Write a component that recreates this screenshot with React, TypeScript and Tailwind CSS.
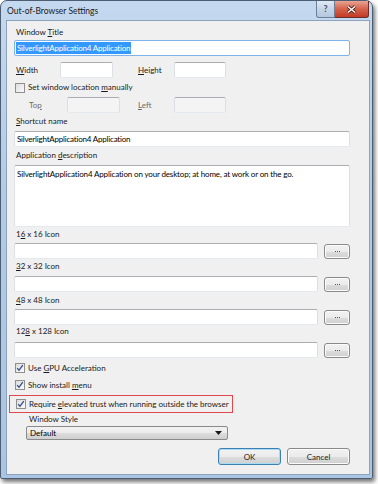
import React from "react";

const font = { fontFamily: 'Lato, "Noto Sans", Arial, sans-serif' };

function U({ children }: { children: React.ReactNode }) {
  return <span className="underline underline-offset-[1px] decoration-[0.5px]">{children}</span>;
}

function Label({ children, className = "" }: { children: React.ReactNode; className?: string }) {
  return <div className={`h-[11px] leading-[11px] text-[8px] text-[#1a1a1a] whitespace-nowrap ${className}`}>{children}</div>;
}

function Input({ className = "", disabled = false, children }: { className?: string; disabled?: boolean; children?: React.ReactNode }) {
  return (
    <div
      className={`h-[16px] rounded-[2px] border border-t-[#abadb3] border-x-[#dbdfe6] border-b-[#e3e9ef] ${
        disabled ? "bg-[#f4f4f4] border-[#c9cbce]" : "bg-white"
      } flex items-center px-[2px] text-[8px] leading-[11px] text-black whitespace-nowrap ${className}`}
    >
      {children}
    </div>
  );
}

function Check({ checked }: { checked?: boolean }) {
  return (
    <div className="w-[10px] h-[10px] border border-[#8f8f8f] bg-gradient-to-br from-[#dcdcdc] to-[#fbfbfb] flex items-center justify-center shrink-0">
      {checked && (
        <svg width="8" height="8" viewBox="0 0 8 8">
          <path d="M1.2 4.2 L3 6.3 L6.8 1.2" fill="none" stroke="#2a4d86" strokeWidth="1.3" />
        </svg>
      )}
    </div>
  );
}

function Btn({ children, className = "", def = false }: { children?: React.ReactNode; className?: string; def?: boolean }) {
  return (
    <div
      className={`rounded-[3px] border ${
        def ? "border-[#3c7fb1] shadow-[inset_0_0_0_1px_#a7dcf7]" : "border-[#8a8a8a] shadow-[inset_0_0_0_1px_#fbfbfb]"
      } bg-[linear-gradient(to_bottom,#f2f2f2_0%,#ebebeb_50%,#dddddd_51%,#cfcfcf_100%)] flex items-center justify-center text-[8px] text-[#1e1e1e] ${className}`}
    >
      {children}
    </div>
  );
}

function IconRow() {
  return (
    <div className="flex items-center gap-[6px]">
      <Input className="w-[304px]" />
      <Btn className="w-[26px] h-[15px]">
        <div className="flex gap-[1px] mt-[1px]">
          <div className="w-[1px] h-[1px] bg-[#555]" />
          <div className="w-[1px] h-[1px] bg-[#555]" />
          <div className="w-[1px] h-[1px] bg-[#555]" />
        </div>
      </Btn>
    </div>
  );
}

export default function App() {
  return (
    <div className="w-[378px] h-[484px] bg-white relative overflow-hidden" style={font}>
      <div className="w-[373px] h-[479px] rounded-t-[7px] rounded-b-[2px] border border-[#4d5e73] bg-[linear-gradient(to_bottom,#c4d9ef,#b3cbe6_40%,#aac4e3)] shadow-[2px_3px_4px_rgba(0,0,0,0.55)] flex flex-col">
        {/* title bar */}
        <div className="h-[19px] flex items-start relative">
          <div className="pl-[6px] pt-[5px] text-[8.5px] leading-[11px] text-[#1b1b1b]">Out-of-Browser Settings</div>
          <div className="absolute right-[3px] top-0 flex">
            <div className="w-[19px] h-[17px] rounded-bl-[3px] border border-[#6d7f98] border-t-0 bg-[linear-gradient(to_bottom,#dfe9f5,#c5d5e8_50%,#b4c7de)] flex items-center justify-center text-[9px] text-[#3f4f66] font-bold">
              ?
            </div>
            <div className="w-[34px] h-[17px] rounded-br-[3px] border border-[#6a2d2a] border-t-0 border-l-0 bg-[linear-gradient(to_bottom,#e8a493,#d5624c_50%,#c23b25)] flex items-center justify-center">
              <svg width="11" height="9" viewBox="0 0 11 9">
                <path d="M2 1.5 L9 7.5 M9 1.5 L2 7.5" stroke="#4a1a12" strokeWidth="3" />
                <path d="M2 1.5 L9 7.5 M9 1.5 L2 7.5" stroke="#ffffff" strokeWidth="1.6" />
              </svg>
            </div>
          </div>
        </div>
        {/* content */}
        <div className="ml-[5px] w-[364px] h-[455px] border border-[#8da2bd] bg-[#f0f0f0] flex flex-col pl-[7px] pr-[19px]">
          <Label className="mt-[6px] pl-[2px]">
            Window <U>T</U>itle
          </Label>
          <div className="mt-[2px] h-[16px] rounded-[2px] border border-[#7eb4ea] bg-white flex items-center px-[1px]">
            <span className="bg-[#3399ff] text-white text-[8px] leading-[12px] px-[1px] tracking-[-0.2px]">SilverlightApplication4 Application</span>
          </div>
          <div className="mt-[6px] flex items-center h-[16px]">
            <Label className="w-[46px] pl-[2px]">
              <U>W</U>idth
            </Label>
            <Input className="w-[53px]" />
            <Label className="ml-[25px] w-[36px]">
              <U>H</U>eight
            </Label>
            <Input className="w-[52px]" />
          </div>
          <div className="mt-[4px] flex items-center gap-[3px] h-[11px] pl-[1px]">
            <Check />
            <Label>
              Set window location <U>m</U>anually
            </Label>
          </div>
          <div className="mt-[4px] flex items-center h-[16px]">
            <Label className="w-[53px] pl-[15px] text-[#6d6d6d]">
              To<U>p</U>
            </Label>
            <Input disabled className="w-[53px]" />
            <Label className="ml-[18px] w-[36px] text-[#6d6d6d]">
              <U>L</U>eft
            </Label>
            <Input disabled className="w-[52px]" />
          </div>
          <Label className="mt-[3px] pl-[2px]">
            <U>S</U>hortcut name
          </Label>
          <Input className="mt-[4px] tracking-[-0.2px]">SilverlightApplication4 Application</Input>
          <Label className="mt-[3px] pl-[2px]">
            Application <U>d</U>escription
          </Label>
          <div className="mt-[4px] h-[62px] rounded-[2px] border border-t-[#abadb3] border-x-[#dbdfe6] border-b-[#e3e9ef] bg-white px-[2px] pt-[3px] text-[8px] leading-[11px] text-black whitespace-nowrap tracking-[-0.15px]">
            SilverlightApplication4 Application on your desktop; at home, at work or on the go.
          </div>
          <Label className="mt-[2px] pl-[2px]">
            1<U>6</U> x 16 Icon
          </Label>
          <div className="mt-[3px]">
            <IconRow />
          </div>
          <Label className="mt-[2px] pl-[2px]">
            <U>3</U>2 x 32 Icon
          </Label>
          <div className="mt-[4px]">
            <IconRow />
          </div>
          <Label className="mt-[3px] pl-[2px]">
            <U>4</U>8 x 48 Icon
          </Label>
          <div className="mt-[3px]">
            <IconRow />
          </div>
          <Label className="mt-[1px] pl-[2px]">
            12<U>8</U> x 128 Icon
          </Label>
          <div className="mt-[5px]">
            <IconRow />
          </div>
          <div className="mt-[4px] flex items-center gap-[3px] h-[12px] pl-[1px]">
            <Check checked />
            <Label>
              Use <U>G</U>PU Acceleration
            </Label>
          </div>
          <div className="mt-[5px] flex items-center gap-[3px] h-[12px] pl-[1px]">
            <Check checked />
            <Label>
              Show install <U>m</U>enu
            </Label>
          </div>
          <div className="mt-[4px] -ml-[5px] w-[224px] h-[18px] border border-[#e0484d] flex items-center gap-[3px] pl-[6px]">
            <Check checked />
            <Label>
              Require <U>e</U>levated trust when running outside the browser
            </Label>
          </div>
          <Label className="mt-[1px] pl-[15px]">Window Style</Label>
          <div className="mt-[1px] ml-[12px] w-[202px] h-[14px] rounded-[2px] border border-[#8a8a8a] bg-[linear-gradient(to_bottom,#f2f2f2_0%,#ebebeb_50%,#dddddd_51%,#cfcfcf_100%)] flex items-center justify-between pl-[3px] pr-[5px]">
            <span className="text-[8px] leading-[11px] text-black">Default</span>
            <svg width="7" height="4" viewBox="0 0 7 4">
              <path d="M0 0 H7 L3.5 4 Z" fill="#1a1a1a" />
            </svg>
          </div>
          <div className="mt-[8px] flex justify-end gap-[6px]">
            <Btn def className="w-[63px] h-[17px]">
              OK
            </Btn>
            <Btn className="w-[63px] h-[17px]">Cancel</Btn>
          </div>
        </div>
      </div>
    </div>
  );
}
